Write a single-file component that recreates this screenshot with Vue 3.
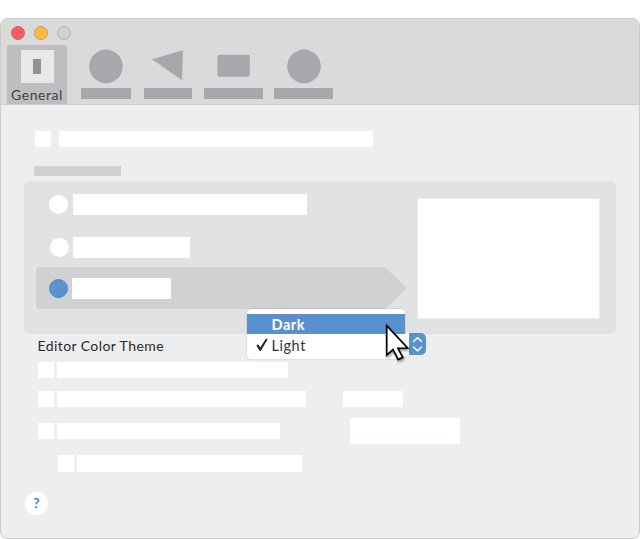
<script setup>
import { ref } from 'vue'

const tabs = [
  { shape: 'circle', width: 50, gap: 14 },
  { shape: 'triangle', width: 48, gap: 13 },
  { shape: 'box', width: 59, gap: 12 },
  { shape: 'circle', width: 59, gap: 11 },
]
const themes = ['Dark', 'Light']
const current = ref('Light')
const hovered = ref('Dark')
</script>

<template>
  <div class="page">
    <main class="window">
      <header class="titlebar">
        <div class="lights">
          <span class="light close"></span>
          <span class="light minimize"></span>
          <span class="light"></span>
        </div>
        <nav class="tabs">
          <div class="general">
            <div class="general-icon"><span></span></div>
            <span class="general-label">General</span>
          </div>
          <div
            v-for="(tab, i) in tabs"
            :key="i"
            class="tab"
            :style="{ width: tab.width + 'px', marginLeft: tab.gap + 'px' }"
          >
            <svg class="shape" width="34" height="34" viewBox="0 0 34 34">
              <circle v-if="tab.shape === 'circle'" cx="17" cy="17.4" r="16.8" />
              <path v-else-if="tab.shape === 'triangle'" d="M1 10.3 32 1.3 31 31.3Z" />
              <rect v-else x="0.4" y="5.7" width="32.4" height="22" rx="2" />
            </svg>
            <span class="caption"></span>
          </div>
        </nav>
      </header>

      <section class="content">
        <div class="row first"><i class="check"></i><i class="bar w314"></i></div>
        <div class="heading"></div>

        <div class="panel">
          <div class="options">
            <div class="option"><i class="radio"></i><i class="field w234"></i></div>
            <div class="option second"><i class="radio"></i><i class="field w117"></i></div>
            <div class="option selected">
              <svg class="arrow" width="371" height="42" viewBox="0 0 371 42">
                <path d="M4 0H349L370.7 21.3 349 42H4Q0 42 0 38V4Q0 0 4 0Z" />
              </svg>
              <i class="radio on"></i><i class="field w99"></i>
            </div>
          </div>
          <div class="preview"></div>
        </div>

        <div class="theme">
          <span class="theme-label">Editor Color Theme</span>
          <div class="select">
            <div class="stepper">
              <svg width="17" height="22" viewBox="0 0 17 22">
                <path d="M4.2 8.7 8.5 4.7 12.8 8.7M4.2 13.8 8.5 17.8 12.8 13.8" />
              </svg>
            </div>
            <div class="menu">
              <div v-for="t in themes" :key="t" class="item" :class="{ hover: t === hovered }">
                <span class="mark">
                  <svg v-if="t === current" width="12" height="14" viewBox="0 0 12 14">
                    <path d="M.4 7.6 2.1 6.3 4.2 9.4 10.1 .6 11.6 1.3 4.8 12.9H3.7Z" />
                  </svg>
                </span>
                <span>{{ t }}</span>
              </div>
            </div>
            <svg class="cursor" width="30" height="42" viewBox="0 0 30 42">
              <path d="M2.7 3.6V33.2L9 27.6 14.2 37.6 18.8 35.3 13.9 26.4 23.6 26Z" />
            </svg>
          </div>
        </div>

        <div class="row r1"><i class="check"></i><i class="bar w231"></i></div>
        <div class="row r2"><i class="check"></i><i class="bar w249"></i><i class="bar w60"></i></div>
        <div class="row r3"><i class="check"></i><i class="bar w223"></i><i class="bar large"></i></div>
        <div class="row r4"><i class="check"></i><i class="bar w225"></i></div>
        <div class="help">?</div>
      </section>
    </main>
  </div>
</template>

<style>
body { background: #fff; }
</style>

<style scoped>
* { box-sizing: border-box; }
.page {
  height: 539px;
  padding-top: 18px;
  overflow: hidden;
  font-family: Lato, "Liberation Sans", sans-serif;
}
.window {
  height: 521px;
  border: 1px solid #cbcccd;
  border-radius: 7px;
  overflow: hidden;
  background: #edeef0;
}
.titlebar {
  height: 86px;
  background: #dadada;
  border-bottom: 1px solid #cccdcd;
}
.lights {
  display: flex;
  gap: 9px;
  height: 26px;
  padding: 7px 0 0 10px;
}
.light {
  width: 14px;
  height: 14px;
  border: 1px solid #b2b3b4;
  border-radius: 50%;
  background: #d0d1d1;
}
.close { background: #f35f5e; border-color: #c9696a; }
.minimize { background: #fdba3e; border-color: #c5a05e; }
.tabs { display: flex; padding-left: 6px; }
.general {
  display: flex;
  flex-direction: column;
  align-items: center;
  width: 60px;
  height: 59px;
  padding-top: 5px;
  border-radius: 3px 3px 0 0;
  background: #bdbebf;
}
.general-icon {
  display: grid;
  place-items: center;
  width: 33px;
  height: 33px;
  background: #e7e8ea;
}
.general-icon span {
  width: 8px;
  height: 15px;
  background: #929395;
}
.general-label {
  margin-top: 3px;
  line-height: 18px;
  font-size: 14px;
  letter-spacing: .55px;
  color: #414244;
}
.tab {
  display: flex;
  flex-direction: column;
  align-items: center;
  padding-top: 4px;
}
.shape { display: block; overflow: visible; fill: #a7a8ac; }
.caption {
  width: 100%;
  height: 11px;
  margin-top: 5px;
  background: #a7a8ac;
}
.row { display: flex; height: 16px; }
.check { width: 16px; background: #fff; }
.bar { margin-left: 3px; background: #fff; }
.first { margin: 26px 0 0 34px; }
.first .bar { margin-left: 8px; }
.w314 { width: 314px; }
.heading {
  width: 87px;
  height: 10px;
  margin: 19px 0 0 33px;
  background: #d0d1d3;
}
.panel {
  display: flex;
  justify-content: space-between;
  width: 592px;
  height: 153px;
  margin: 5px 0 0 23px;
  padding: 0 16px 0 12px;
  border-radius: 5px;
  background: #e1e2e4;
}
.options { padding-top: 12px; }
.option {
  display: flex;
  align-items: center;
  gap: 5px;
  height: 22px;
  padding-left: 13px;
}
.second { margin-top: 21px; padding-left: 14px; gap: 4px; }
.selected {
  position: relative;
  width: 371px;
  height: 42px;
  margin-top: 9px;
  gap: 4px;
}
.arrow {
  position: absolute;
  inset: 0;
  fill: #d0d1d3;
}
.radio {
  width: 19px;
  height: 19px;
  border-radius: 50%;
  background: #fff;
}
.on {
  position: relative;
  border: 1px solid #4a8bd0;
  background: #5b92cd;
}
.field {
  position: relative;
  height: 21px;
  background: #fff;
}
.w234 { width: 234px; }
.w117 { width: 117px; }
.w99 { width: 99px; }
.preview {
  width: 183px;
  height: 121px;
  margin-top: 17px;
  border: 1px solid #ebebec;
  background: #fff;
}
.theme {
  display: flex;
  height: 28px;
  padding-left: 36.5px;
}
.theme-label {
  width: 209.5px;
  padding-top: 3px;
  line-height: 18px;
  font-size: 14px;
  letter-spacing: .42px;
  color: #29292b;
}
.select {
  position: relative;
  display: flex;
  justify-content: flex-end;
  width: 179px;
  height: 22px;
  margin-top: -1px;
  border-radius: 5px;
  background: #fff;
}
.stepper {
  width: 17px;
  height: 22px;
  border-radius: 0 5px 5px 0;
  background: #5b92cd;
}
.stepper svg { display: block; }
.stepper path {
  fill: none;
  stroke: #fff;
  stroke-width: 1.4;
}
.menu {
  position: absolute;
  left: 0;
  top: -24px;
  width: 158px;
  height: 50px;
  padding-top: 5px;
  border-radius: 4px;
  background: #fff;
  box-shadow: 0 0 1.5px rgba(0, 0, 0, .3);
}
.item {
  display: flex;
  align-items: center;
  height: 20px;
  padding-left: 9px;
  font-size: 14.5px;
  letter-spacing: .55px;
  color: #333335;
}
.item + .item { margin-top: 1px; }
.mark {
  display: flex;
  width: 15.5px;
}
.mark path { fill: #242426; }
.hover {
  background: #5b90ce;
  color: #fff;
  font-weight: 700;
}
.cursor {
  position: absolute;
  left: 137px;
  top: -11px;
  filter: drop-shadow(1px 2px 1px rgba(0, 0, 0, .35));
}
.cursor path {
  fill: #fff;
  stroke: #000;
  stroke-width: 1.7;
}
.r1 { padding-left: 37px; }
.w231 { width: 231px; }
.r2 { margin-top: 13px; padding-left: 37px; }
.w249 { width: 249px; }
.w60 { width: 60px; margin-left: 37px; }
.r3 { margin-top: 16px; padding-left: 37px; }
.w223 { width: 223px; }
.large {
  width: 110px;
  height: 26px;
  margin: -5px 0 0 70px;
}
.r4 { height: 17px; margin-top: 16px; padding-left: 57px; }
.w225 { width: 225px; }
.help {
  width: 23px;
  height: 23px;
  margin: 20px 0 0 24px;
  border-radius: 50%;
  background: #fff;
  color: #2176c7;
  font-size: 14px;
  font-weight: 600;
  line-height: 22px;
  text-align: center;
}
</style>
